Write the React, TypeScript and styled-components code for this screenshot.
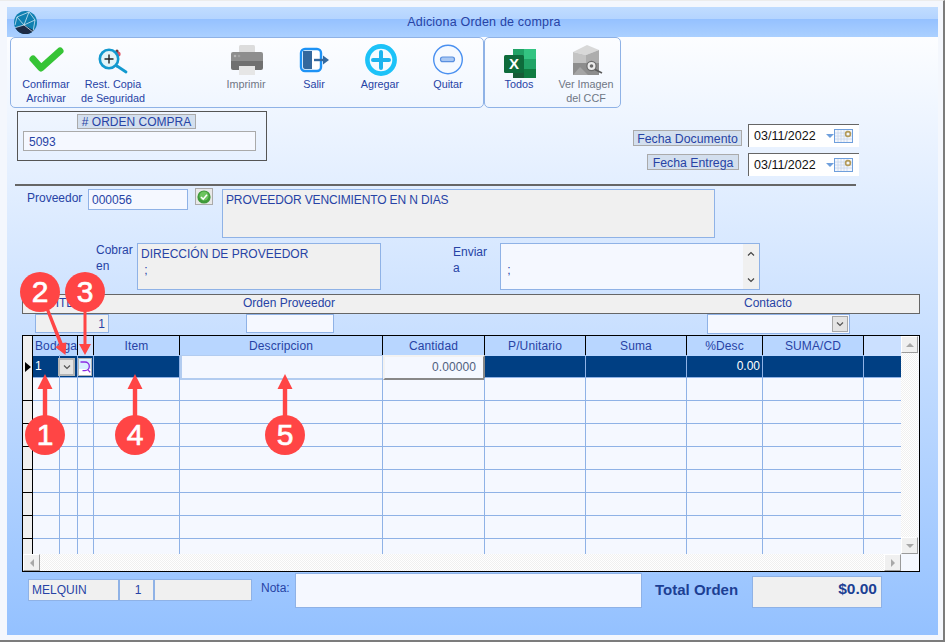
import React from 'react';
import styled, { createGlobalStyle } from 'styled-components';

const GlobalStyle = createGlobalStyle`
  html, body {
    margin: 0;
    padding: 0;
    background: #f4f7fd;
  }
  * {
    box-sizing: border-box;
  }
  body {
    font-family: "Liberation Sans", Arial, sans-serif;
    font-size: 12px;
    color: #2743a5;
  }
`;

const LINE = '#8fb2e6';
const GRAY = '#f0f0f0';
const COLUMNS = '10px 27px 18px 16px 86px 203px 102px 101px 101px 76px 101px 37px';

const Frame = styled.div`
  position: relative;
  width: 945px;
  height: 642px;
  padding: 6px 5px 5px 7px;
  overflow: hidden;
  background: #f4f7fd;
  border-top: 1px solid #ececec;
  border-right: 2px solid #7c7c7c;
  border-bottom: 2px solid #7c7c7c;
`;

const Client = styled.div`
  display: flex;
  flex-direction: column;
  height: 628px;
  background: linear-gradient(#fcfdff 5%, #94c1ff 100%);
`;

const TitleBar = styled.div`
  display: flex;
  align-items: center;
  flex: 0 0 30px;
  padding: 0 7px;
  background: linear-gradient(#c0dcff 0, #b4d4ff 40%, #95c1ff 41%, #abd0ff 100%);
`;

const TitleText = styled.div`
  flex: 1;
  text-align: center;
  font-size: 12.5px;
  letter-spacing: 0.2px;
`;

const Toolbar = styled.div`
  display: flex;
  flex: 0 0 71px;
  padding-left: 3px;
`;

const ToolGroup = styled.div<{ $cols: string; $width: number }>`
  display: grid;
  grid-template-columns: ${(p) => p.$cols};
  width: ${(p) => p.$width}px;
  height: 71px;
  border: 1px solid ${LINE};
  border-radius: 5px;
`;

const ToolButton = styled.div<{ $muted?: boolean }>`
  display: flex;
  flex-direction: column;
  align-items: center;
  padding-top: 6px;
  font-size: 10.8px;
  line-height: 14px;
  text-align: center;
  white-space: nowrap;
  color: ${(p) => (p.$muted ? '#6f7684' : '#2743a5')};

  svg {
    display: block;
    width: 40px;
    height: 32px;
    margin-bottom: 1px;
    overflow: visible;
  }
`;

const TopRow = styled.div`
  display: flex;
  justify-content: space-between;
  flex: 0 0 76px;
  padding: 3px 79px 0 10px;
`;

const OrderBox = styled.div`
  width: 250px;
  height: 50px;
  padding-top: 2px;
  border: 1px solid #555;
`;

const Caption = styled.div`
  display: flex;
  align-items: center;
  justify-content: center;
  height: 15px;
  background: #d3dfee;
  border: 1px solid #aaa;
  white-space: nowrap;
`;

const OrderCaption = styled(Caption)`
  width: 119px;
  margin-left: 59px;
`;

const OrderInput = styled.div`
  width: 233px;
  height: 20px;
  margin: 2px 0 0 5px;
  padding-left: 5px;
  line-height: 21px;
  background: #f5f8ff;
  border: 1px solid #aaa;
`;

const DateColumn = styled.div`
  display: flex;
  flex-direction: column;
  gap: 6px;
  margin-top: 13px;
`;

const DateRow = styled.div`
  display: flex;
  justify-content: flex-end;
  align-items: flex-end;
`;

const DateCaption = styled(Caption)<{ $width: number; $gap: number; $drop: number }>`
  width: ${(p) => p.$width}px;
  height: 16px;
  margin: 0 ${(p) => p.$gap}px ${(p) => p.$drop}px 0;
  padding-top: 1px;
  font-size: 12.3px;
`;

const DateField = styled.div`
  display: flex;
  align-items: center;
  width: 111px;
  height: 23px;
  padding: 0 6px 0 5px;
  font-size: 12.5px;
  color: #111;
  background: #fff;
  border-top: 1px solid #666;
  border-left: 1px solid #666;

  span {
    flex: 1;
  }
`;

const Rule = styled.div`
  flex: 0 0 2px;
  width: 841px;
  margin-left: 8px;
  background: #666;
`;

const SupplierRow = styled.div`
  display: grid;
  grid-template-columns: 61px 100px 34px 493px;
  flex: 0 0 49px;
  margin: 3px 0 0 20px;
`;

const FieldLabel = styled.div<{ $top: number }>`
  margin-top: ${(p) => p.$top}px;
  line-height: 16px;
`;

const InputBox = styled.div`
  height: 21px;
  padding-left: 3px;
  line-height: 21px;
  background: #f5f8ff;
  border: 1px solid ${LINE};
`;

const CheckButton = styled.div`
  display: flex;
  align-items: center;
  justify-content: center;
  width: 18px;
  height: 17px;
  margin: -1px 0 0 7px;
  background: #e8e8e8;
  border: 1px solid #aaa;

  svg {
    width: 14px;
    height: 14px;
  }
`;

const TextBox = styled.div<{ $tight?: boolean }>`
  padding: 2px 3px 0;
  line-height: 16px;
  white-space: pre;
  letter-spacing: ${(p) => (p.$tight ? '-0.13px' : '0')};
  background: ${GRAY};
  border: 1px solid ${LINE};
`;

const AddressRow = styled.div`
  display: grid;
  grid-template-columns: 41px 244px 72px 47px 260px;
  flex: 0 0 47px;
  margin: 5px 0 0 89px;
`;

const ScrollTextBox = styled(TextBox)`
  display: flex;
  justify-content: space-between;
  padding: 2px 0 0 3px;
  background: #f5f8ff;
`;

const MiniScroll = styled.div`
  display: flex;
  flex-direction: column;
  justify-content: space-between;
  align-items: center;
  width: 16px;
  margin-top: -2px;
  padding: 7px 0 6px;
  background: ${GRAY};

  svg {
    width: 8px;
    height: 6px;
  }
`;

const HeadBar = styled.div`
  display: grid;
  grid-template-columns: 68px 135px 100px 369px 143px;
  flex: 0 0 20px;
  width: 898px;
  margin: 4px 0 0 15px;
  padding-left: 13px;
  line-height: 17px;
  background: ${GRAY};
  border: 1px solid #666;
`;

const HeadLabel = styled.div<{ $indent?: number }>`
  padding-left: ${(p) => p.$indent ?? 0}px;
  text-align: ${(p) => (p.$indent ? 'left' : 'center')};
  white-space: nowrap;
`;

const SubRow = styled.div`
  display: grid;
  grid-template-columns: 74px 137px 88px 373px 143px;
  flex: 0 0 21px;
  margin-left: 28px;
`;

const CountBox = styled.div`
  height: 19px;
  padding-right: 3px;
  line-height: 18px;
  text-align: right;
  background: ${GRAY};
  border: 1px solid ${LINE};
`;

const PlainBox = styled.div`
  height: 19px;
  background: #f5f8ff;
  border: 1px solid ${LINE};
`;

const SelectBox = styled(PlainBox)`
  display: flex;
  justify-content: flex-end;
  align-items: center;
  height: 20px;
  padding-right: 1px;
`;

const ComboButton = styled.div`
  display: flex;
  align-items: center;
  justify-content: center;
  width: 16px;
  height: 16px;
  background: #e4e4e4;
  border: 1px solid #a8a8a8;

  svg {
    width: 8px;
    height: 6px;
  }
`;

const Table = styled.div`
  display: grid;
  grid-template-columns: 878px 17px;
  grid-template-rows: 218px 17px;
  flex: 0 0 237px;
  width: 898px;
  margin-left: 15px;
  background: #f5f8ff;
  border: 1px solid #000;
`;

const Sheet = styled.div`
  overflow: hidden;
  background: #f5f8ff;
`;

const HeaderRow = styled.div`
  display: grid;
  grid-template-columns: ${COLUMNS};
  height: 19px;
  border-bottom: 1px solid #000;
`;

const HeaderCell = styled.div<{ $span?: number; $left?: boolean; $blank?: boolean }>`
  grid-column: span ${(p) => p.$span ?? 1};
  padding-left: ${(p) => (p.$left ? 2 : 0)}px;
  line-height: 20px;
  letter-spacing: 0.12px;
  text-align: ${(p) => (p.$left ? 'left' : 'center')};
  background: ${(p) => (p.$blank ? '#cbe0ff' : '#b8d6ff')};
  border-right: 1px solid #000;
`;

const EndHeaderCell = styled.div`
  background: #cbe0ff;
`;

const Corner = styled(HeaderCell)`
  background: ${GRAY};
`;

const DataRow = styled.div<{ $active?: boolean }>`
  display: grid;
  grid-template-columns: ${COLUMNS};
  height: 23px;
  line-height: 23px;
  background: ${(p) => (p.$active ? '#003f83' : '#f5f8ff')};
  border-bottom: 1px solid ${LINE};
`;

const RowHead = styled.div`
  display: flex;
  align-items: center;
  margin-bottom: -1px;
  background: ${GRAY};
  border-right: 1px solid #000;
  border-bottom: 1px solid #000;

  svg {
    width: 6px;
    height: 10px;
    margin-left: 2px;
  }
`;

const Cell = styled.div<{ $dark?: boolean; $right?: boolean }>`
  padding: 0 2px;
  text-align: ${(p) => (p.$right ? 'right' : 'left')};
  color: ${(p) => (p.$dark ? '#fff' : '#2743a5')};
  border-right: 1px solid ${LINE};
`;

const EndCell = styled.div``;

const ComboCell = styled.div`
  position: relative;
  z-index: 1;
  display: flex;
  align-items: center;
  margin-left: -2px;
  border-right: 1px solid ${LINE};
`;

const RowCombo = styled(ComboButton)`
  width: 17px;
  height: 18px;
  border-width: 2px;
  border-color: #b5b5b5;
`;

const LookupCell = styled.div`
  display: flex;
  align-items: center;
  justify-content: center;
  padding-right: 1px;
  border-right: 1px solid ${LINE};
`;

const LookupButton = styled.div`
  display: flex;
  align-items: center;
  justify-content: center;
  width: 14px;
  height: 18px;
  background: linear-gradient(#d8eeff 65%, #fff 65%);
  border: 1px solid #b5b5b5;

  svg {
    width: 12px;
    height: 14px;
  }
`;

const EditCell = styled.div`
  margin-bottom: -1px;
  padding: 0 2px;
  background: #f5f8ff;
  border: 1px solid #b2ccf0;
  border-width: 1px 1px 2px 2px;
`;

const QtyCell = styled.div`
  margin-bottom: -1px;
  padding-right: 7px;
  line-height: 21px;
  text-align: right;
  letter-spacing: 0.1px;
  color: #50607e;
  background: #f5f8ff;
  border: 2px solid #f2f2f2;
  border-right-color: #888;
  border-bottom-color: #888;
`;

const ScrollTrack = styled.div<{ $vertical?: boolean }>`
  display: flex;
  flex-direction: ${(p) => (p.$vertical ? 'column' : 'row')};
  justify-content: space-between;
  background: repeating-conic-gradient(#f0f0f0 0 25%, #fff 0 50%) 0 0 / 2px 2px;
`;

const ScrollButton = styled.div`
  display: flex;
  align-items: center;
  justify-content: center;
  width: 17px;
  height: 17px;
  background: ${GRAY};
  border: 1px solid;
  border-color: #fff #9a9a9a #9a9a9a #fff;
`;

const Triangle = styled.div<{ $dir: 'up' | 'down' | 'left' | 'right' }>`
  width: 0;
  height: 0;
  border: 4px solid transparent;
  ${(p) => (p.$dir === 'up' ? 'border-top-width: 0; border-bottom-color: #a8a8a8;' : '')}
  ${(p) => (p.$dir === 'down' ? 'border-bottom-width: 0; border-top-color: #a8a8a8;' : '')}
  ${(p) => (p.$dir === 'left' ? 'border-left-width: 0; border-right-color: #a8a8a8;' : '')}
  ${(p) => (p.$dir === 'right' ? 'border-right-width: 0; border-left-color: #a8a8a8;' : '')}
`;

const Footer = styled.div`
  display: grid;
  grid-template-columns: 224px 43px 347px 110px 130px;
  padding: 1px 0 0 21px;
`;

const UserBoxes = styled.div`
  display: grid;
  grid-template-columns: 91px 35px 98px;
  height: 22px;
  margin-top: 6px;
`;

const UserBox = styled.div<{ $center?: boolean }>`
  padding-left: 3px;
  line-height: 20px;
  text-align: ${(p) => (p.$center ? 'center' : 'left')};
  background: ${GRAY};
  border: 1px solid ${LINE};
`;

const NotaLabel = styled.div`
  padding: 8px 0 0 9px;
`;

const NotaBox = styled.div`
  height: 35px;
  background: #f5f8ff;
  border: 1px solid ${LINE};
`;

const TotalLabel = styled.div`
  padding: 8px 0 0 13px;
  font-size: 15px;
  font-weight: 700;
  line-height: 18px;
  white-space: nowrap;
  color: #1c3f94;
`;

const TotalBox = styled.div`
  height: 32px;
  margin-top: 3px;
  padding: 3px 4px 0 0;
  font-size: 15.5px;
  font-weight: 700;
  text-align: right;
  color: #1c3f94;
  background: ${GRAY};
  border: 1px solid ${LINE};
`;

const Arrows = styled.svg`
  position: absolute;
  top: -1px;
  left: 0;
  width: 945px;
  height: 642px;
  pointer-events: none;
`;

const Badge = styled.div<{ $x: number; $y: number }>`
  position: absolute;
  top: ${(p) => p.$y - 21}px;
  left: ${(p) => p.$x - 20}px;
  width: 40px;
  height: 40px;
  font-size: 30px;
  line-height: 40px;
  text-align: center;
  color: #fff;
  background: #ff4545;
  border-radius: 50%;
  -webkit-text-stroke: 0.7px #fff;
`;

const Chevron = ({ up, color = '#555' }: { up?: boolean; color?: string }) => (
  <svg viewBox="0 0 8 6">
    <path d={up ? 'M1 4.5 4 1.5 7 4.5' : 'M1 1.5 4 4.5 7 1.5'} fill="none" stroke={color} strokeWidth="1.2" />
  </svg>
);

const Logo = () => (
  <svg width="23" height="23" viewBox="0 0 23 23">
    <defs>
      <clipPath id="globe">
        <circle cx="11.5" cy="11.5" r="11.5" />
      </clipPath>
    </defs>
    <g clipPath="url(#globe)">
      <rect width="23" height="23" fill="#0f7fb0" />
      <path d="M0 17 10 14 23 21V23H0Z" fill="#1d2c47" />
      <path
        d="M3 6 15 1M3 6 10 14M3 6 1 14M15 1 21 9M15 1 10 14M21 9 10 14M21 9 19 21M10 14 19 21M10 14 0 17"
        fill="none"
        stroke="#cfe6f2"
        strokeWidth="0.8"
      />
    </g>
  </svg>
);

const CheckMark = () => (
  <svg viewBox="0 0 40 32">
    <path d="M7 15 15 24 34 7" fill="none" stroke="#36c436" strokeWidth="7" strokeLinecap="round" strokeLinejoin="round" />
  </svg>
);

const RestoreIcon = () => (
  <svg viewBox="0 0 40 32">
    <circle cx="25" cy="10" r="2.6" fill="#e2505f" />
    <circle cx="24" cy="7" r="1.6" fill="#6b3a3a" />
    <path d="M24 22 33 28" stroke="#1299cf" strokeWidth="2.8" strokeLinecap="round" />
    <circle cx="16" cy="15" r="9.2" fill="#e2f4f8" stroke="#1299cf" strokeWidth="2.6" />
    <path d="M11.5 15H20.5M16 10.5V19.5" stroke="#222" strokeWidth="1.4" />
  </svg>
);

const PrinterIcon = () => (
  <svg viewBox="0 0 40 32">
    <rect x="13" y="1" width="16" height="9" rx="1.5" fill="#dcdcdc" />
    <path d="M7 8H35Q37 8 37 10V17H5V10Q5 8 7 8Z" fill="#8e8e8e" />
    <path d="M5 17H37V24Q37 26 35 26H7Q5 26 5 24Z" fill="#707070" />
    <circle cx="9" cy="12" r="1.3" fill="#b5b5b5" />
    <circle cx="13" cy="12" r="1.3" fill="#a3a3a3" />
    <rect x="13" y="22" width="16" height="9" fill="#e6e6e6" />
  </svg>
);

const ExitIcon = () => (
  <svg viewBox="0 0 40 32">
    <rect x="7" y="5" width="20" height="22" rx="4" fill="#fff" stroke="#1d92f5" strokeWidth="2.4" />
    <path d="M9 7H18V25H11Q9 25 9 23Z" fill="#33689e" />
    <path d="M20 16H31" stroke="#33689e" strokeWidth="2.4" />
    <path d="M29 11.5 35 16 29 20.5Z" fill="#33689e" />
  </svg>
);

const PlusIcon = () => (
  <svg viewBox="0 0 40 32">
    <circle cx="21" cy="16" r="13.6" fill="#f6fbff" stroke="#1cc2f8" strokeWidth="4.6" />
    <path d="M13 16H29M21 8V24" stroke="#1cb4ee" strokeWidth="4" strokeLinecap="round" />
  </svg>
);

const MinusIcon = () => (
  <svg viewBox="0 0 40 32">
    <circle cx="20" cy="15.5" r="14.3" fill="#f6faff" stroke="#4a90f0" strokeWidth="1.4" />
    <rect x="12.5" y="13" width="14" height="4.6" rx="2.2" fill="#a9c8f3" stroke="#5a90e0" strokeWidth="1.2" />
  </svg>
);

const ExcelIcon = () => (
  <svg viewBox="0 0 40 32">
    <rect x="14" y="5" width="11" height="10" fill="#21a366" />
    <rect x="25" y="5" width="12" height="10" fill="#33c481" />
    <rect x="14" y="15" width="11" height="10" fill="#107c41" />
    <rect x="25" y="15" width="12" height="10" fill="#21a366" />
    <rect x="14" y="25" width="11" height="9" fill="#185c37" />
    <rect x="25" y="25" width="12" height="9" fill="#107c41" />
    <rect x="5" y="11" width="20" height="18" rx="1.5" fill="#0e6b3b" />
    <text x="15" y="25" textAnchor="middle" fontFamily="Liberation Sans" fontWeight="700" fontSize="15" fill="#fff">
      X
    </text>
  </svg>
);

const ImageIcon = () => (
  <svg viewBox="0 0 40 32">
    <path d="M7 8 21 1 33 6 20 11Z" fill="#d8d8d8" />
    <path d="M7 8 20 11V20H7Z" fill="#c4c4c4" />
    <path d="M20 11 33 6V20H20Z" fill="#adadad" />
    <rect x="7" y="19" width="26" height="12" fill="#8d8d8d" />
    <path d="M7 31 14 23 22 31Z" fill="#a5a5a5" />
    <circle cx="25.5" cy="22" r="4.6" fill="#ececec" stroke="#6b6b6b" strokeWidth="1.2" />
    <circle cx="25.5" cy="22" r="1.8" fill="#6b6b6b" />
    <path d="M29 25.5 36 29" stroke="#5c5c5c" strokeWidth="1.8" />
  </svg>
);

const CalendarIcon = () => (
  <svg width="27" height="14" viewBox="0 0 27 14">
    <path d="M0 5H8L4 9Z" fill="#6f9fdc" />
    <rect x="8.5" y="0.5" width="18" height="13" fill="#f3f6fb" stroke="#6f9fdc" />
    <path
      d="M9 4H26M9 7H26M9 10H26M12 1V13M15 1V13M18 1V13M21 1V13"
      stroke="#c7d6ec"
      strokeWidth="0.8"
    />
    <circle cx="22" cy="5" r="2.4" fill="#f3f6fb" stroke="#b39a58" strokeWidth="1.6" />
  </svg>
);

const OkBadge = () => (
  <svg viewBox="0 0 14 14">
    <circle cx="7" cy="7" r="6.6" fill="#3f9a3a" />
    <circle cx="7" cy="6" r="4.6" fill="#6cc45e" />
    <path d="M4 7 6.2 9.2 10 4.8" fill="none" stroke="#fff" strokeWidth="1.6" />
  </svg>
);

const LensIcon = () => (
  <svg viewBox="0 0 12 14">
    <path d="M1.5 2H6A4.3 4.3 0 0 1 6 10.6H3.5" fill="none" stroke="#8a2be2" strokeWidth="1.3" />
    <path d="M8.8 9.6 11.2 12.4" fill="none" stroke="#8a2be2" strokeWidth="1.3" />
  </svg>
);

const DateInput = ({ label, width, gap, drop }: { label: string; width: number; gap: number; drop: number }) => (
  <DateRow>
    <DateCaption $width={width} $gap={gap} $drop={drop}>
      {label}
    </DateCaption>
    <DateField>
      <span>03/11/2022</span>
      <CalendarIcon />
    </DateField>
  </DateRow>
);

const emptyRows = [0, 1, 2, 3, 4, 5, 6, 7];

const EmptyRow = () => (
  <DataRow>
    <RowHead />
    {Array.from({ length: 10 }).map((_, i) => (
      <Cell key={i} />
    ))}
    <EndCell />
  </DataRow>
);

export default function App() {
  return (
    <>
      <GlobalStyle />
      <Frame>
        <Client>
          <TitleBar>
            <Logo />
            <TitleText>Adiciona Orden de compra</TitleText>
          </TitleBar>

          <Toolbar>
            <ToolGroup $width={474} $cols="70px 64px 68px 66px 70px 62px 74px">
              <ToolButton>
                <CheckMark />
                Confirmar
                <br />
                Archivar
              </ToolButton>
              <ToolButton>
                <RestoreIcon />
                Rest. Copia
                <br />
                de Seguridad
              </ToolButton>
              <div />
              <ToolButton $muted>
                <PrinterIcon />
                Imprimir
              </ToolButton>
              <ToolButton>
                <ExitIcon />
                Salir
              </ToolButton>
              <ToolButton>
                <PlusIcon />
                Agregar
              </ToolButton>
              <ToolButton>
                <MinusIcon />
                Quitar
              </ToolButton>
            </ToolGroup>
            <ToolGroup $width={137} $cols="68px 66px">
              <ToolButton>
                <ExcelIcon />
                Todos
              </ToolButton>
              <ToolButton $muted>
                <ImageIcon />
                Ver Imagen
                <br />
                del CCF
              </ToolButton>
            </ToolGroup>
          </Toolbar>

          <TopRow>
            <OrderBox>
              <OrderCaption># ORDEN COMPRA</OrderCaption>
              <OrderInput>5093</OrderInput>
            </OrderBox>
            <DateColumn>
              <DateInput label="Fecha Documento" width={109} gap={6} drop={1} />
              <DateInput label="Fecha Entrega" width={92} gap={9} drop={6} />
            </DateColumn>
          </TopRow>

          <Rule />

          <SupplierRow>
            <FieldLabel $top={1}>Proveedor</FieldLabel>
            <InputBox>000056</InputBox>
            <CheckButton>
              <OkBadge />
            </CheckButton>
            <TextBox $tight>PROVEEDOR VENCIMIENTO EN N DIAS</TextBox>
          </SupplierRow>

          <AddressRow>
            <FieldLabel $top={-1}>
              Cobrar
              <br />
              en
            </FieldLabel>
            <TextBox>
              DIRECCIÓN DE PROVEEDOR
              <br /> ;
            </TextBox>
            <div />
            <FieldLabel $top={1}>
              Enviar
              <br />a
            </FieldLabel>
            <ScrollTextBox>
              <div>
                <br /> ;
              </div>
              <MiniScroll>
                <Chevron up color="#444" />
                <Chevron color="#444" />
              </MiniScroll>
            </ScrollTextBox>
          </AddressRow>

          <HeadBar>
            <HeadLabel>ITEM</HeadLabel>
            <div />
            <HeadLabel>Orden Proveedor</HeadLabel>
            <div />
            <HeadLabel $indent={36}>Contacto</HeadLabel>
          </HeadBar>

          <SubRow>
            <CountBox>1</CountBox>
            <div />
            <PlainBox />
            <div />
            <SelectBox>
              <ComboButton>
                <Chevron />
              </ComboButton>
            </SelectBox>
          </SubRow>

          <Table>
            <Sheet>
              <HeaderRow>
                <Corner />
                <HeaderCell $span={2} $left>
                  Bodega
                </HeaderCell>
                <HeaderCell $blank />
                <HeaderCell>Item</HeaderCell>
                <HeaderCell>Descripcion</HeaderCell>
                <HeaderCell>Cantidad</HeaderCell>
                <HeaderCell>P/Unitario</HeaderCell>
                <HeaderCell>Suma</HeaderCell>
                <HeaderCell>%Desc</HeaderCell>
                <HeaderCell>SUMA/CD</HeaderCell>
                <EndHeaderCell />
              </HeaderRow>

              <DataRow $active>
                <RowHead>
                  <svg viewBox="0 0 6 10">
                    <path d="M0 0 6 5 0 10Z" fill="#000" />
                  </svg>
                </RowHead>
                <Cell $dark>1</Cell>
                <ComboCell>
                  <RowCombo>
                    <Chevron />
                  </RowCombo>
                </ComboCell>
                <LookupCell>
                  <LookupButton>
                    <LensIcon />
                  </LookupButton>
                </LookupCell>
                <Cell />
                <EditCell />
                <QtyCell>0.00000</QtyCell>
                <Cell />
                <Cell />
                <Cell $dark $right>
                  0.00
                </Cell>
                <Cell />
                <EndCell />
              </DataRow>

              {emptyRows.map((r) => (
                <EmptyRow key={r} />
              ))}
            </Sheet>

            <ScrollTrack $vertical>
              <ScrollButton>
                <Triangle $dir="up" />
              </ScrollButton>
              <ScrollButton>
                <Triangle $dir="down" />
              </ScrollButton>
            </ScrollTrack>

            <ScrollTrack>
              <ScrollButton>
                <Triangle $dir="left" />
              </ScrollButton>
              <ScrollButton>
                <Triangle $dir="right" />
              </ScrollButton>
            </ScrollTrack>
          </Table>

          <Footer>
            <UserBoxes>
              <UserBox>MELQUIN</UserBox>
              <UserBox $center>1</UserBox>
              <UserBox />
            </UserBoxes>
            <NotaLabel>Nota:</NotaLabel>
            <NotaBox />
            <TotalLabel>Total Orden</TotalLabel>
            <TotalBox>$0.00</TotalBox>
          </Footer>
        </Client>

        <Arrows viewBox="0 0 945 642">
          <g fill="#ff4545">
            <path d="M45 374 52.5 389H47.2V420H42.8V389H37.5Z" />
            <path d="M135 374 142.5 389H137.2V420H132.8V389H127.5Z" />
            <path d="M285 374 292.5 389H287.2V420H282.8V389H277.5Z" />
            <path d="M83.5 305H86.5V344H91L85 355 79 344H83.5Z" />
            <path d="M44 305 47 304 62.6 343 66.4 342.5 65.5 355 55.2 347.1 59.4 345 Z" />
          </g>
        </Arrows>
        <Badge $x={40} $y={292}>2</Badge>
        <Badge $x={85} $y={292}>3</Badge>
        <Badge $x={45} $y={435}>1</Badge>
        <Badge $x={135} $y={435}>4</Badge>
        <Badge $x={285} $y={435}>5</Badge>
      </Frame>
    </>
  );
}
